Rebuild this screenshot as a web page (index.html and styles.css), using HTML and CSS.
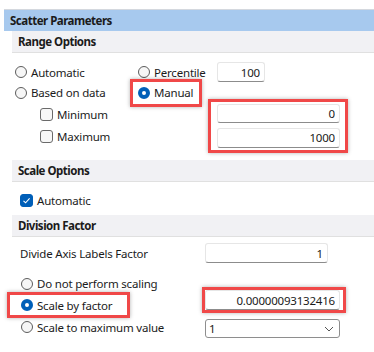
FILE: index.html
```html
<!DOCTYPE html>
<html lang="en">
  <head>
    <meta charset="UTF-8" />
    <meta name="viewport" content="width=device-width, initial-scale=1.0" />
    <title>Scatter Parameters</title>
    <link rel="stylesheet" href="styles.css">
  </head>
  <body>
    <div class="panel">
      <div class="panel-title">Scatter Parameters</div>

      <!-- Range options -->
      <div class="group">
        <div class="group-title">Range Options</div>
        <div class="range-grid">
          <label class="opt"><span class="radio"></span>Automatic</label>
          <label class="opt"><span class="radio"></span>Percentile</label>
          <input class="field field-short" type="text" value="100" />

          <label class="opt"><span class="radio"></span>Based on data</label>
          <label class="opt hl hl-manual"><span class="radio on"></span>Manual</label>
          <span></span>

          <label class="opt sub row-min"><span class="check"></span>Minimum</label>
          <label class="opt sub row-max"><span class="check"></span>Maximum</label>
          <div class="hl hl-minmax">
            <input class="field" type="text" value="0" />
            <input class="field" type="text" value="1000" />
          </div>
        </div>
      </div>

      <!-- Scale options -->
      <div class="group">
        <div class="group-title">Scale Options</div>
        <div class="scale-body">
          <label class="opt"><span class="check on"><svg width="9" height="9" viewBox="0 0 9 9"><path d="M1.5 4.8 L3.6 6.8 L7.6 2.4" fill="none" stroke="#fff" stroke-width="1.1"/></svg></span>Automatic</label>
        </div>
      </div>

      <!-- Division factor -->
      <div class="group">
        <div class="group-title">Division Factor</div>
        <div class="div-grid">
          <div class="text-label">Divide Axis Labels Factor</div>
          <input class="field" type="text" value="1" />

          <label class="opt no-scale"><span class="radio"></span>Do not perform scaling</label>
          <span></span>

          <label class="opt hl hl-factor"><span class="radio on"></span>Scale by factor</label>
          <div class="hl hl-value">
            <input class="field" type="text" value="0.00000093132416" />
          </div>

          <label class="opt"><span class="radio"></span>Scale to maximum value</label>
          <div class="select">
            <span>1</span>
            <svg width="10" height="6" viewBox="0 0 10 6"><path d="M1 1 L5 5 L9 1" fill="none" stroke="#555" stroke-width="1"/></svg>
          </div>
        </div>
      </div>
    </div>
  </body>
</html>
```

FILE: styles.css
```css
body {
  margin: 0;
  background: #fff;
  font-family: "Noto Sans", "Segoe UI", sans-serif;
  font-size: 11.5px;
  letter-spacing: -0.2px;
  color: #1b1b1b;
}

.panel {
  padding-top: 9px;
  padding-left: 4px;
}

.panel-title {
  /* 蓝色标题栏 */
  height: 21px;
  line-height: 21px;
  border-top: 1px solid #d4d8de;
  background: #a7c9ee;
  font-weight: bold;
  letter-spacing: -0.5px;
  padding-left: 6px;
}

.group {
  margin-left: 8px;
}

.group-title {
  height: 21px;
  line-height: 21px;
  background: #f1f1f4;
  border-bottom: 1px solid #e0e0e0;
  font-weight: bold;
  letter-spacing: -0.5px;
  padding-left: 6px;
}

/* 单选、复选 */
.opt {
  display: flex;
  align-items: center;
  gap: 4px;
  height: 16px;
  white-space: nowrap;
}

.radio {
  width: 10px;
  height: 10px;
  border: 1px solid #5c5c5c;
  border-radius: 50%;
  background: #f6f6f6;
  flex: none;
}

.radio.on {
  width: 4px;
  height: 4px;
  border: 4px solid #005fb8;
  background: #fff;
}

.check {
  width: 11px;
  height: 11px;
  border: 1px solid #6a6a6a;
  border-radius: 3px;
  background: #f7f7f7;
  flex: none;
  display: flex;
  align-items: center;
  justify-content: center;
}

.check.on {
  background: #005fb8;
  border-color: #005fb8;
}

/* 输入框 */
.field {
  box-sizing: border-box;
  width: 123px;
  height: 20px;
  border: 1px solid #e6e6e6;
  border-bottom-color: #8c8c8c;
  border-radius: 3px;
  background: #fff;
  font-family: inherit;
  font-size: 11.5px;
  letter-spacing: -0.2px;
  color: #1b1b1b;
  text-align: right;
  padding: 0 4px;
  outline: none;
}

.field-short {
  width: 48px;
}

/* 红色标注框 */
.hl {
  box-sizing: border-box;
  border: 3px solid #f04848;
  box-shadow: 0 0 4px rgba(0, 0, 0, 0.3);
}

.range-grid {
  display: grid;
  grid-template-columns: 123px 79px 123px;
  grid-template-rows: 20px 21px 22px 23px;
  align-items: center;
  padding: 9px 0 12px 3px;
}

.hl-manual {
  width: 72px;
  height: 28px;
  padding-left: 5px;
  margin-left: -8px;
}

.sub {
  padding-left: 25px;
}

.row-min {
  grid-row: 3;
  grid-column: 1;
}

.row-max {
  grid-row: 4;
  grid-column: 1;
}

.hl-minmax {
  grid-row: 3 / 5;
  grid-column: 3;
  display: flex;
  flex-direction: column;
  gap: 5px;
  padding: 2px 5px 2px 6px;
  margin: -5px -8px -5px -9px;
}

.hl-minmax .field:first-child {
  height: 19px;
}

.scale-body {
  padding: 10px 0 7px 8px;
}

.div-grid {
  display: grid;
  grid-template-columns: 184px 135px;
  grid-template-rows: 20px 31px 22px 22px;
  align-items: center;
  padding: 6px 0 14px 9px;
}

.text-label {
  margin-left: -1px;
}

.no-scale {
  margin-top: 10px;
}

.hl-factor {
  width: 123px;
  height: 26px;
  padding-left: 11px;
  margin-left: -14px;
}

.hl-value {
  align-self: start;
  margin: -7px -6px 0 -3px;
  padding-right: 3px;
}

.hl-value .field {
  width: 135px;
  display: block;
}

.select {
  align-self: end;
  box-sizing: border-box;
  width: 135px;
  height: 19px;
  border: 1px solid #8e8e8e;
  border-radius: 3px;
  display: flex;
  align-items: center;
  justify-content: space-between;
  padding: 0 5px 0 3px;
}
```
